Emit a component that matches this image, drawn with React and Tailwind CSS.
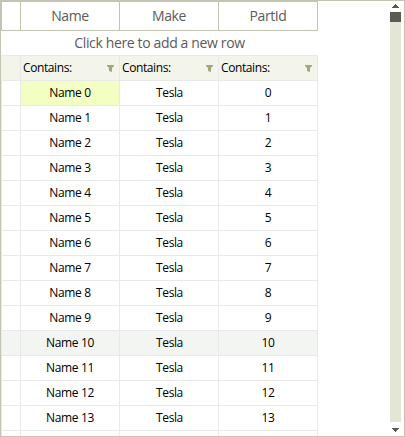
const names = ["Name", "Make", "PartId"];
const rows = Array.from({ length: 14 }, (_, i) => i);

function Funnel() {
  return (
    <svg width="7" height="7" viewBox="0 0 7 7" className="mt-px" fill="#a3a77c">
      <path d="M0 0H7V1L5 3V7L2 6V3L0 1Z" />
    </svg>
  );
}

function Arrow({ down }) {
  return (
    <svg width="7" height="4" viewBox="0 0 7 4" shapeRendering="crispEdges" fill="#5b5b52" className={down ? "rotate-180" : ""}>
      <path d="M3 0H4V1H5V2H6V3H7V4H0V3H1V2H2V1H3Z" />
    </svg>
  );
}

function Row({ index }) {
  const cell = "flex items-center justify-center border-r border-b border-[#e9e9e9]";
  return (
    <div className={`grid h-[25px] shrink-0 grid-cols-[20px_99px_99px_99px] ${index === 10 ? "bg-[#f3f5f2]" : ""}`}>
      <div className={`${cell} border-l`} />
      <div className={`${cell} tracking-[-0.35px] ${index === 0 ? "bg-[#f3ffc2]" : ""}`}>Name {index}</div>
      <div className={`${cell} pl-px tracking-[-0.4px]`}>Tesla</div>
      <div className={`${cell} tracking-[-0.25px]`}>{index}</div>
    </div>
  );
}

export default function App() {
  return (
    <div className="flex h-[437px] w-[405px] justify-between overflow-hidden border border-[#c4c4b2] bg-white font-['Open_Sans','Noto_Sans',sans-serif] text-[12px] leading-4 text-black">
      <div className="flex w-[317px] flex-col overflow-hidden">
        <div className="grid h-[30px] shrink-0 grid-cols-[19px_99px_99px_99px] border-t border-l border-[#c4c4b2] text-[14px] tracking-[-0.4px] text-[#5b5b5b]">
          <div className="border-r border-b border-[#c4c4b2]" />
          {names.map((n) => (
            <div key={n} className="flex items-center justify-center border-r border-b border-[#c4c4b2]">{n}</div>
          ))}
        </div>
        <div className="flex h-[25px] shrink-0 items-center justify-center border-b border-[#e9e9e9] text-[14px] tracking-[-0.36px] text-[#5b5b5b]">
          Click here to add a new row
        </div>
        <div className="grid h-[25px] shrink-0 grid-cols-[20px_99px_99px_99px] bg-[#f3f4ea]">
          <div className="border-r border-b border-[#e9e9e9]" />
          {names.map((n) => (
            <div key={n} className="flex items-center justify-between border-r border-b border-[#e9e9e9] pr-[5px] pl-0.5 tracking-[-0.4px]">
              <span>Contains:</span>
              <Funnel />
            </div>
          ))}
        </div>
        {rows.map((i) => (
          <Row key={i} index={i} />
        ))}
        <div className="grid grow grid-cols-[20px_99px_99px_99px]">
          <div className="border-r border-l border-[#e9e9e9]" />
          <div className="border-r border-[#e9e9e9]" />
          <div className="border-r border-[#e9e9e9]" />
          <div className="border-r border-[#e9e9e9]" />
        </div>
      </div>
      <div className="mr-[3px] flex w-[11px] flex-col items-center">
        <div className="flex h-[11px] items-start pt-[3px]"><Arrow /></div>
        <div className="w-full grow bg-[#e3e6d4]">
          <div className="h-2.5 bg-[#5b5b52]" />
        </div>
        <div className="flex h-[14px] items-start pt-1.5"><Arrow down /></div>
      </div>
    </div>
  );
}
